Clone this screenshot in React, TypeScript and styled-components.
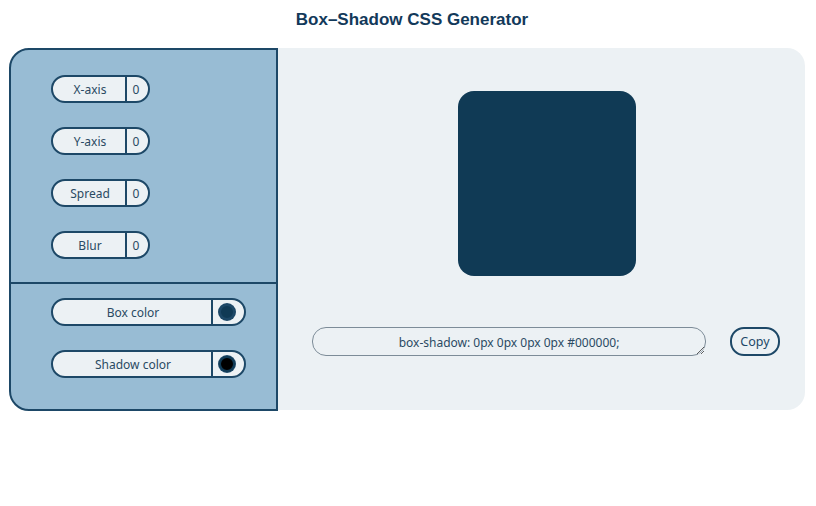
import styled, { createGlobalStyle } from 'styled-components';

const GlobalStyle = createGlobalStyle`
  body {
    margin: 0;
    background: #ffffff;
    font-family: "Noto Sans", "Open Sans", sans-serif;
  }
`;

const Page = styled.div`
  width: 816px;
  padding-top: 10px;
`;

const Title = styled.h1`
  margin: 0 0 19px 0;
  text-align: center;
  font-family: "Liberation Sans", Arial, sans-serif;
  font-size: 17px;
  line-height: 19px;
  font-weight: 700;
  color: #12395a;
  padding-left: 8px;
`;

const Generator = styled.div`
  display: grid;
  grid-template-columns: 269px 527px;
  margin-left: 9px;
  height: 363px;
`;

const Controls = styled.div`
  display: flex;
  flex-direction: column;
  background: #98bcd4;
  border: 2px solid #1d4867;
  border-radius: 20px 0 0 20px;
`;

const Group = styled.div<{ $top: number; $bottom: number }>`
  display: flex;
  flex-direction: column;
  gap: 24px;
  padding: ${(p) => p.$top}px 0 ${(p) => p.$bottom}px 40px;
`;

const Divider = styled.div`
  height: 2px;
  background: #1d4867;
`;

const Pill = styled.div`
  display: flex;
  width: fit-content;
  height: 28px;
  box-sizing: border-box;
  border: 2px solid #1d4867;
  border-radius: 14px;
  background: #ecf1f4;
  overflow: hidden;
`;

const PillLabel = styled.span<{ $width: number }>`
  width: ${(p) => p.$width}px;
  box-sizing: border-box;
  display: flex;
  align-items: center;
  justify-content: center;
  font-size: 12px;
  color: #2a4a63;
  border-right: 2px solid #1d4867;
  padding-left: 2px;
`;

const PillValue = styled.span`
  width: 21px;
  box-sizing: border-box;
  display: flex;
  align-items: center;
  justify-content: center;
  font-size: 12px;
  color: #2a4a63;
  padding-right: 3px;
`;

const Swatch = styled.span`
  width: 31px;
  display: flex;
  align-items: center;
  justify-content: center;
`;

const Dot = styled.span<{ $color: string; $ring: string }>`
  width: 12px;
  height: 12px;
  border-radius: 50%;
  background: ${(p) => p.$color};
  border: 2px solid ${(p) => p.$ring};
  box-shadow: 0 0 0 1px #1d4867;
  margin-right: 3px;
`;

const Preview = styled.div`
  background: #ecf1f4;
  border-radius: 0 18px 18px 0;
  display: flex;
  flex-direction: column;
  height: 362px;
`;

const BoxArea = styled.div`
  display: flex;
  justify-content: center;
  padding: 43px 0 0 10px;
`;

const ShadowBox = styled.div`
  width: 178px;
  height: 185px;
  border-radius: 16px;
  background: #103a55;
  box-shadow: 0px 0px 0px 0px #000000;
`;

const OutputRow = styled.div`
  display: flex;
  align-items: center;
  gap: 24px;
  padding: 51px 0 0 34px;
`;

const Output = styled.textarea`
  width: 394px;
  height: 29px;
  box-sizing: border-box;
  border: 1px solid #7d8c98;
  border-radius: 14px;
  background: #ecf1f4;
  font-family: "Noto Sans", "Open Sans", sans-serif;
  font-size: 12px;
  line-height: 17px;
  padding: 6px 10px 5px;
  text-align: center;
  color: #2a4a63;
  overflow: hidden;
  resize: both;
  outline: none;
`;

const CopyButton = styled.button`
  width: 50px;
  height: 29px;
  border: 2px solid #1d4867;
  border-radius: 14px;
  background: transparent;
  color: #1d4867;
  font-family: "Noto Sans", "Open Sans", sans-serif;
  font-size: 12.5px;
  padding: 0;
  cursor: pointer;
`;

const sliders = ['X-axis', 'Y-axis', 'Spread', 'Blur'];

const colors = [
  { label: 'Box color', color: '#103a55', ring: '#1d4867' },
  { label: 'Shadow color', color: '#000000', ring: '#103a55' },
];

export default function App() {
  return (
    <Page>
      <GlobalStyle />
      <Title>Box–Shadow CSS Generator</Title>
      <Generator>
        <Controls>
          <Group $top={25} $bottom={23}>
            {sliders.map((name) => (
              <Pill key={name}>
                <PillLabel $width={74}>{name}</PillLabel>
                <PillValue>0</PillValue>
              </Pill>
            ))}
          </Group>
          <Divider />
          <Group $top={14} $bottom={0}>
            {colors.map((c) => (
              <Pill key={c.label}>
                <PillLabel $width={160}>{c.label}</PillLabel>
                <Swatch>
                  <Dot $color={c.color} $ring={c.ring} />
                </Swatch>
              </Pill>
            ))}
          </Group>
        </Controls>
        <Preview>
          <BoxArea>
            <ShadowBox />
          </BoxArea>
          <OutputRow>
            <Output readOnly value="box-shadow: 0px 0px 0px 0px #000000;" />
            <CopyButton>Copy</CopyButton>
          </OutputRow>
        </Preview>
      </Generator>
    </Page>
  );
}
